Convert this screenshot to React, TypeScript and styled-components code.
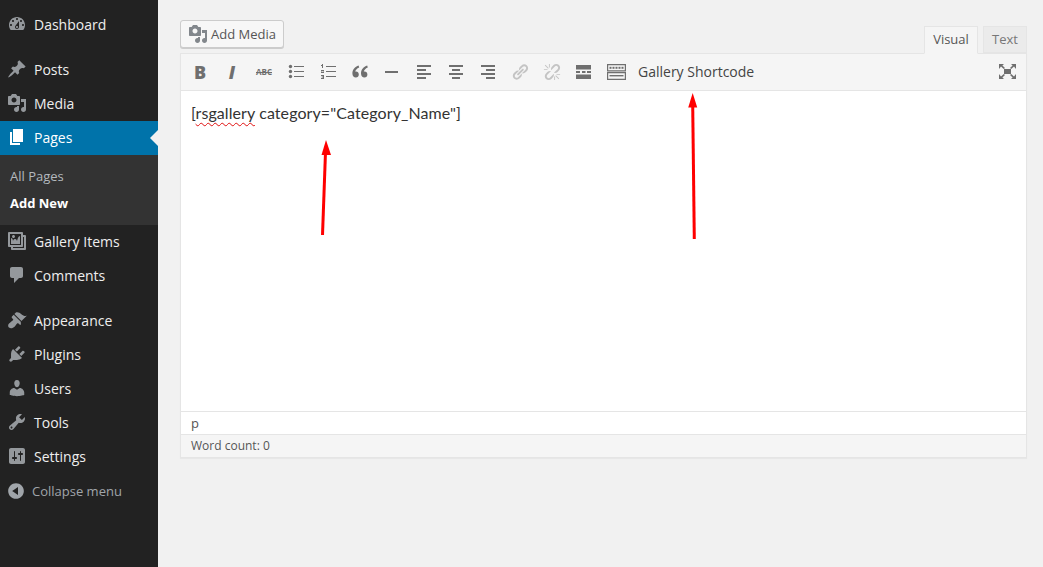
import React from "react";
import styled, { createGlobalStyle } from "styled-components";

const Global = createGlobalStyle`
  html, body { margin: 0; padding: 0; background: #f1f1f1; overflow: hidden; }
  * { box-sizing: border-box; }
  body { font-family: "Open Sans", "Liberation Sans", sans-serif; }
`;

const Page = styled.div`
  position: relative;
  display: flex;
  width: 1043px;
  height: 567px;
  overflow: hidden;
`;
const Sidebar = styled.nav`
  width: 158px;
  flex: none;
  background: #222;
  padding-top: 8px;
`;
const MenuRow = styled.div<{ $active?: boolean; $gapAbove?: boolean }>`
  position: relative;
  display: flex;
  align-items: center;
  height: 34px;
  margin-top: ${(p) => (p.$gapAbove ? "11px" : "0")};
  padding: 0 0 2px 7px;
  background: ${(p) => (p.$active ? "#0073aa" : "transparent")};
  color: ${(p) => (p.$active ? "#fff" : "#eee")};
  font-size: 14px;
  svg { color: ${(p) => (p.$active ? "#fff" : "#94989c")}; }
`;
const MenuLabel = styled.span`
  margin-left: 7px;
`;
const MenuIcon = styled.svg`
  width: 20px;
  height: 20px;
  flex: none;
  fill: currentColor;
`;
const Pointer = styled.span`
  position: absolute;
  right: 0;
  top: 9px;
  border: 8px solid transparent;
  border-right-color: #f1f1f1;
  border-left: 0;
`;
const SubMenu = styled.div`
  background: #333;
  height: 70px;
  padding-top: 8px;
`;
const SubItem = styled.div<{ $current?: boolean }>`
  height: 27px;
  line-height: 27px;
  padding-left: 10px;
  font-size: 13px;
  color: ${(p) => (p.$current ? "#fff" : "#b4b9be")};
  font-weight: ${(p) => (p.$current ? 700 : 400)};
`;
const Collapse = styled.div`
  display: flex;
  align-items: center;
  height: 34px;
  padding-left: 6px;
  color: #a0a5aa;
  font-size: 13px;
  svg { color: #a0a5aa; }
`;
const CollapseLabel = styled.span`
  margin-left: 6px;
`;

const Main = styled.main`
  flex: 1;
  padding: 20px 16px 0 22px;
`;
const EditorHead = styled.div`
  display: flex;
  justify-content: space-between;
  height: 33px;
`;
const MediaButton = styled.button`
  display: flex;
  align-items: center;
  gap: 3px;
  width: 104px;
  height: 28px;
  padding: 0 0 0 7px;
  background: #f7f7f7;
  border: 1px solid #ccc;
  border-radius: 3px;
  box-shadow: 0 1px 0 #ccc;
  color: #555;
  font: 13px "Open Sans", sans-serif;
  svg { width: 20px; height: 20px; fill: #82878c; }
`;
const Tabs = styled.div`
  display: flex;
  align-items: flex-start;
  gap: 5px;
  padding-top: 6px;
`;
const Tab = styled.div<{ $active?: boolean }>`
  position: relative;
  z-index: 1;
  height: ${(p) => (p.$active ? "28px" : "27px")};
  width: ${(p) => (p.$active ? "54px" : "44px")};
  border: 1px solid #e5e5e5;
  border-bottom-color: ${(p) => (p.$active ? "#f5f5f5" : "#e5e5e5")};
  background: ${(p) => (p.$active ? "#f5f5f5" : "#ebebeb")};
  color: ${(p) => (p.$active ? "#555" : "#777")};
  font-size: 13px;
  line-height: 25px;
  text-align: center;
`;
const Editor = styled.section`
  border: 1px solid #e5e5e5;
  box-shadow: 0 1px 1px rgba(0, 0, 0, 0.04);
  background: #fff;
`;
const Toolbar = styled.div`
  display: flex;
  align-items: center;
  height: 37px;
  padding: 0 3px 1px;
  background: #f5f5f5;
  border-bottom: 1px solid #e5e5e5;
`;
const Tool = styled.span<{ $muted?: boolean }>`
  display: flex;
  width: 32px;
  height: 30px;
  align-items: center;
  justify-content: center;
  color: ${(p) => (p.$muted ? "#c4c4c4" : "#6f6f6f")};
  svg { display: block; fill: currentColor; }
`;
const BoldGlyph = styled.span`
  font: 800 18px "Open Sans", sans-serif;
`;
const ItalicGlyph = styled.span`
  font: italic 800 18px "Open Sans", sans-serif;
`;
const StrikeGlyph = styled.span`
  font: 700 8px "Open Sans", sans-serif;
  text-decoration: line-through;
`;
const ShortcodeLabel = styled.span`
  margin-left: 6px;
  font-size: 14px;
  color: #444;
`;
const Spacer = styled.span`
  flex: 1;
`;
const Content = styled.div`
  height: 320px;
  padding: 10px 10px;
  font: 16px/24px Lato, "Liberation Sans", sans-serif;
  letter-spacing: 0.09px;
  color: #333;
`;
const Misspelled = styled.span`
  text-decoration: underline wavy #e01010;
  text-decoration-thickness: 1.2px;
  text-underline-offset: 3px;
`;
const PathBar = styled.div`
  height: 23px;
  padding-left: 10px;
  border-top: 1px solid #e5e5e5;
  font-size: 13px;
  line-height: 22px;
  color: #555;
`;
const CountBar = styled.div`
  height: 23px;
  padding-left: 10px;
  border-top: 1px solid #e5e5e5;
  background: #f5f5f5;
  font-size: 12px;
  line-height: 22px;
  color: #555;
`;
const ArrowLayer = styled.svg`
  position: absolute;
  left: 0;
  top: 0;
  width: 1043px;
  height: 567px;
  pointer-events: none;
`;

const P = {
  dashboard: "M3.76 16h12.48c1.1-1.37 1.76-3.11 1.76-5 0-4.42-3.58-8-8-8s-8 3.58-8 8c0 1.89.66 3.63 1.76 5zM10 4c.55 0 1 .45 1 1s-.45 1-1 1-1-.45-1-1 .45-1 1-1zM6 6c.55 0 1 .45 1 1s-.45 1-1 1-1-.45-1-1 .45-1 1-1zm8 0c.55 0 1 .45 1 1s-.45 1-1 1-1-.45-1-1 .45-1 1-1zm-5.37 5.55L12 7v6c0 1.1-.9 2-2 2s-2-.9-2-2c0-.57.24-1.08.63-1.45zM4 10c.55 0 1 .45 1 1s-.45 1-1 1-1-.45-1-1 .45-1 1-1zm12 0c.55 0 1 .45 1 1s-.45 1-1 1-1-.45-1-1 .45-1 1-1zm-5 3c0-.55-.45-1-1-1s-1 .45-1 1 .45 1 1 1 1-.45 1-1z",
  post: "M10.44 3.02l1.82-1.82 6.36 6.35-1.83 1.82c-1.05-.68-2.48-.57-3.41.36l-.75.75c-.92.93-1.04 2.35-.35 3.41l-1.83 1.82-2.41-2.41-2.8 2.79c-.42.42-3.38 2.71-3.8 2.29s1.86-3.39 2.28-3.81l2.79-2.79L4.1 9.36l1.83-1.82c1.05.69 2.48.57 3.4-.36l.75-.75c.93-.92 1.05-2.35.36-3.41z",
  media: "M13 11V4c0-.55-.45-1-1-1h-1.67L9 1H5L3.67 3H2c-.55 0-1 .45-1 1v7c0 .55.45 1 1 1h10c.55 0 1-.45 1-1zM7 4.5c1.38 0 2.5 1.12 2.5 2.5S8.38 9.5 7 9.5 4.5 8.38 4.5 7 5.62 4.5 7 4.5zM14 6h5v10.5c0 1.38-1.12 2.5-2.5 2.5S14 17.88 14 16.5s1.12-2.5 2.5-2.5c.17 0 .34.02.5.05V9h-3V6zm-4 8.05V13h2v3.5c0 1.38-1.12 2.5-2.5 2.5S7 17.88 7 16.5 8.12 14 9.5 14c.17 0 .34.02.5.05z",
  page: "M6 15V2h10v13H6zm-1 1h8v2H3V5h2v11z",
  gallery: "M16 4h1.96c.57 0 1.04.47 1.04 1.04v12.92c0 .57-.47 1.04-1.04 1.04H5.04C4.47 19 4 18.53 4 17.96V16H2.04C1.47 16 1 15.53 1 14.96V2.04C1 1.47 1.47 1 2.04 1h12.92c.57 0 1.04.47 1.04 1.04V4zM3 14h11V3H3v11zm5-8.5C8 4.67 7.33 4 6.5 4S5 4.67 5 5.5 5.67 7 6.5 7 8 6.33 8 5.5zm2 4.5s1-5 3-5v8H4V7c2 0 2 3 2 3s.33-2 2-2 2 2 2 2zm7 7V6h-1v8.96c0 .57-.47 1.04-1.04 1.04H6v1h11z",
  comments: "M5 2h9c1.1 0 2 .9 2 2v7c0 1.1-.9 2-2 2h-2l-5 5v-5H5c-1.1 0-2-.9-2-2V4c0-1.1.9-2 2-2z",
  appearance: "M14.48 11.06L7.41 3.99l1.5-1.5c.5-.56 2.3-.47 3.51.32 1.21.8 1.43 1.28 2.91 2.1 1.18.64 2.45 1.26 4.45.85zm-.71.71L6.7 4.7 4.93 6.47c-.39.39-.39 1.02 0 1.41l1.06 1.06c.39.39.39 1.03 0 1.42-.6.6-1.43 1.11-2.21 1.69-.35.26-.7.53-1.01.84C1.43 13.23.4 15.83 2 17.43c1.6 1.6 4.2.57 5.54-.77.31-.31.58-.66.84-1.01.58-.78 1.09-1.61 1.69-2.21.39-.39 1.03-.39 1.42 0l1.06 1.06c.39.39 1.02.39 1.41 0z",
  plugins: "M13.11 4.36L9.87 7.6 8 5.73l3.24-3.24c.35-.34 1.05-.2 1.56.32.52.51.66 1.21.31 1.55zm-8 1.77l.91-1.12 9.01 9.01-1.19.84c-.71.71-2.63 1.16-3.82 1.16H6.14L4.9 17.26c-.59.59-1.54.59-2.12 0-.59-.58-.59-1.53 0-2.12l1.24-1.24v-3.88c0-1.13.4-3.19 1.09-3.89zm7.26 3.97l3.24-3.24c.34-.35 1.04-.21 1.55.31.52.51.66 1.21.31 1.55l-3.24 3.25z",
  users: "M10 9.25c-2.27 0-2.73-3.44-2.73-3.44C7 4.02 7.82 2 9.97 2c2.16 0 2.98 2.02 2.71 3.81 0 0-.41 3.44-2.68 3.44zm0 2.57L12.72 10c2.39 0 4.52 2.33 4.52 4.53v2.49s-3.65 1.13-7.24 1.13c-3.65 0-7.24-1.13-7.24-1.13v-2.49c0-2.25 1.94-4.48 4.47-4.48z",
  tools: "M16.68 9.77c-1.34 1.34-3.3 1.67-4.95.99l-5.41 6.52c-.99.99-2.59.99-3.58 0s-.99-2.59 0-3.57l6.52-5.42c-.68-1.65-.35-3.61.99-4.95 1.28-1.28 3.12-1.62 4.72-1.06l-2.89 2.89 2.82 2.82 2.86-2.87c.53 1.58.18 3.39-1.08 4.65zM3.81 16.21c.4.39 1.04.39 1.43 0 .4-.4.4-1.04 0-1.43-.39-.4-1.03-.4-1.43 0-.39.39-.39 1.03 0 1.43z",
  settings: "M18 16V4c0-1.1-.9-2-2-2H4c-1.1 0-2 .9-2 2v12c0 1.1.9 2 2 2h12c1.1 0 2-.9 2-2zM8 11h1c.55 0 1 .45 1 1s-.45 1-1 1H8v1.5c0 .28-.22.5-.5.5s-.5-.22-.5-.5V13H6c-.55 0-1-.45-1-1s.45-1 1-1h1V5.5c0-.28.22-.5.5-.5s.5.22.5.5V11zm5-2h-1c-.55 0-1-.45-1-1s.45-1 1-1h1V5.5c0-.28.22-.5.5-.5s.5.22.5.5V7h1c.55 0 1 .45 1 1s-.45 1-1 1h-1v5.5c0 .28-.22.5-.5.5s-.5-.22-.5-.5V9z",
  collapse: "M10 2.16c4.33 0 7.84 3.51 7.84 7.84s-3.51 7.84-7.84 7.84S2.16 14.33 2.16 10 5.71 2.16 10 2.16zm2 11.72V6.12L6.18 9.97z",
  link: "M17.74 2.76c1.68 1.69 1.68 4.41 0 6.1l-1.53 1.52c-1.12 1.12-2.7 1.47-4.14 1.09l2.62-2.61.76-.77.76-.76c.84-.84.84-2.2 0-3.04-.84-.85-2.2-.85-3.04 0l-.77.76-3.38 3.38c-.37-1.44-.02-3.02 1.1-4.14l1.52-1.53c1.69-1.68 4.42-1.68 6.1 0zM8.59 13.43l5.34-5.34c.42-.42.42-1.1 0-1.52-.44-.43-1.13-.39-1.53 0l-5.33 5.34c-.42.42-.42 1.1 0 1.52.44.43 1.13.39 1.52 0zm-.76 2.29l4.14-4.15c.38 1.44.03 3.02-1.09 4.14l-1.52 1.53c-1.69 1.68-4.41 1.68-6.1 0-1.68-1.68-1.68-4.42 0-6.1l1.53-1.52c1.12-1.12 2.7-1.47 4.14-1.1l-4.14 4.15c-.85.84-.85 2.2 0 3.05.84.84 2.2.84 3.04 0z",
  unlink: "M17.74 2.26c1.68 1.69 1.68 4.41 0 6.1l-1.53 1.52c-1.12 1.12-2.7 1.47-4.14 1.09l2.62-2.61 1.52-1.53c.84-.84.84-2.2 0-3.04-.84-.85-2.2-.85-3.04 0L9.03 7.93c-.37-1.44-.02-3.02 1.1-4.14l1.52-1.53c1.69-1.68 4.42-1.68 6.1 0zM7.83 16.22l4.14-4.15c.38 1.44.03 3.02-1.09 4.14l-1.52 1.53c-1.69 1.68-4.41 1.68-6.1 0-1.68-1.68-1.68-4.42 0-6.1l1.53-1.52c1.12-1.12 2.7-1.47 4.14-1.1l-4.14 4.15c-.85.84-.85 2.2 0 3.05.84.84 2.2.84 3.04 0zM2 2.7l.7-.7 3.6 3.6-.7.7zM13.7 14.4l.7-.7 3.6 3.6-.7.7zM6.6 1h1v4h-1zM1 6.6h4v1H1zM12.4 15h1v4h-1zM15 12.4h4v1h-4z",
};

const Icon = ({ d }: { d: string }) => (
  <MenuIcon viewBox="0 0 20 20">
    <path d={d} />
  </MenuIcon>
);

const Lines = ({ rows }: { rows: [number, number, number][] }) => (
  <svg width="16" height="16" viewBox="0 0 16 16">
    {rows.map(([x, y, w], i) => (
      <rect key={i} x={x} y={y} width={w} height={2} />
    ))}
  </svg>
);

const BulletList = () => (
  <svg width="16" height="16" viewBox="0 0 16 16">
    {[2, 7, 12].map((y) => (
      <React.Fragment key={y}>
        <circle cx="2.5" cy={y + 0.5} r="1.7" />
        <rect x="6" y={y} width="10" height="1" />
      </React.Fragment>
    ))}
  </svg>
);

const NumberList = () => (
  <svg width="16" height="16" viewBox="0 0 16 16">
    <path d="M2 0h1v4H2zM1 1h1v1H1z" />
    <path d="M1 6h3v1.5H2.2V8H4v1H1V7.5h1.8V7H1z" />
    <path d="M1 11h3v4H1v-1h2v-.5H1.6v-1H3V12H1z" />
    {[2, 7, 12].map((y) => (
      <rect key={y} x="6" y={y} width="10" height="1" />
    ))}
  </svg>
);

const QuoteMark = () => (
  <svg width="16" height="13" viewBox="0 0 16 13">
    <path d="M6.6 0.6C3 1.8 0.4 4.6 0.4 8.6 0.4 11 2 12.6 3.8 12.6c1.8 0 3-1.3 3-3s-1.2-3-2.8-3c-.3 0-.6 0-.8.1C3.5 5 4.8 3.4 7.2 2.4z" />
    <path d="M15.2 0.6C11.6 1.8 9 4.6 9 8.6c0 2.4 1.6 4 3.4 4 1.8 0 3-1.3 3-3s-1.2-3-2.8-3c-.3 0-.6 0-.8.1.3-1.7 1.6-3.3 4-4.3z" />
  </svg>
);

const MoreBreak = () => (
  <svg width="16" height="16" viewBox="0 0 16 16">
    <rect x="0" y="1" width="15" height="4.5" />
    <rect x="0" y="7" width="4" height="2" />
    <rect x="6" y="7" width="3.5" height="2" />
    <rect x="11" y="7" width="4" height="2" />
    <rect x="0" y="10.5" width="15" height="4.5" />
  </svg>
);

const KeyboardTable = () => (
  <svg width="19" height="16" viewBox="0 0 19 16">
    <path d="M0 0h19v7.5H0zM1.2 1.2v5.1h16.6V1.2z" />
    <path d="M0 8h19v8H0zM1.2 9.2v5.6h16.6V9.2z" />
    {[3, 6, 9, 12, 15].map((x) => (
      <rect key={x} x={x - 0.5} y="2.8" width="2" height="2" />
    ))}
    <rect x="2.5" y="11" width="14" height="1.4" />
  </svg>
);

const items: { label: string; d: string; gap?: boolean }[] = [
  { label: "Gallery Items", d: P.gallery },
  { label: "Comments", d: P.comments },
  { label: "Appearance", d: P.appearance, gap: true },
  { label: "Plugins", d: P.plugins },
  { label: "Users", d: P.users },
  { label: "Tools", d: P.tools },
  { label: "Settings", d: P.settings },
];

export default function App() {
  return (
    <Page>
      <Global />
      <Sidebar>
        <MenuRow>
          <Icon d={P.dashboard} />
          <MenuLabel>Dashboard</MenuLabel>
        </MenuRow>
        <MenuRow $gapAbove>
          <Icon d={P.post} />
          <MenuLabel>Posts</MenuLabel>
        </MenuRow>
        <MenuRow>
          <Icon d={P.media} />
          <MenuLabel>Media</MenuLabel>
        </MenuRow>
        <MenuRow $active>
          <Icon d={P.page} />
          <MenuLabel>Pages</MenuLabel>
          <Pointer />
        </MenuRow>
        <SubMenu>
          <SubItem>All Pages</SubItem>
          <SubItem $current>Add New</SubItem>
        </SubMenu>
        {items.map((it) => (
          <MenuRow key={it.label} $gapAbove={it.gap}>
            <Icon d={it.d} />
            <MenuLabel>{it.label}</MenuLabel>
          </MenuRow>
        ))}
        <Collapse>
          <Icon d={P.collapse} />
          <CollapseLabel>Collapse menu</CollapseLabel>
        </Collapse>
      </Sidebar>
      <Main>
        <EditorHead>
          <MediaButton>
            <svg viewBox="0 0 20 20">
              <path d={P.media} />
            </svg>
            Add Media
          </MediaButton>
          <Tabs>
            <Tab $active>Visual</Tab>
            <Tab>Text</Tab>
          </Tabs>
        </EditorHead>
        <Editor>
          <Toolbar>
            <Tool><BoldGlyph>B</BoldGlyph></Tool>
            <Tool><ItalicGlyph>I</ItalicGlyph></Tool>
            <Tool><StrikeGlyph>ABC</StrikeGlyph></Tool>
            <Tool><BulletList /></Tool>
            <Tool><NumberList /></Tool>
            <Tool><QuoteMark /></Tool>
            <Tool>
              <Lines rows={[[1, 7, 13]]} />
            </Tool>
            <Tool><Lines rows={[[1, 1, 14], [1, 5, 9], [1, 9, 14], [1, 13, 9]]} /></Tool>
            <Tool><Lines rows={[[1, 1, 14], [4, 5, 8], [1, 9, 14], [4, 13, 8]]} /></Tool>
            <Tool><Lines rows={[[1, 1, 14], [6, 5, 9], [1, 9, 14], [6, 13, 9]]} /></Tool>
            <Tool $muted>
              <svg width="18" height="18" viewBox="0 0 20 20"><path d={P.link} /></svg>
            </Tool>
            <Tool $muted>
              <svg width="18" height="18" viewBox="0 0 20 20"><path d={P.unlink} /></svg>
            </Tool>
            <Tool><MoreBreak /></Tool>
            <Tool><KeyboardTable /></Tool>
            <ShortcodeLabel>Gallery Shortcode</ShortcodeLabel>
            <Spacer />
            <Tool>
              <svg width="17" height="15" viewBox="0 0 17 15">
                <rect x="5" y="5" width="7" height="5" />
                <path d="M0 0h5L3.4 1.6 6 4 4.8 5 2 2.6 0 5zM17 0h-5l1.6 1.6L11 4l1.2 1L15 2.6 17 5zM0 15h5l-1.6-1.6L6 11l-1.2-1L2 12.4 0 10zM17 15h-5l1.6-1.6L11 11l1.2-1 2.8 2.4 2-2.4z" />
              </svg>
            </Tool>
          </Toolbar>
          <Content>
            [<Misspelled>rsgallery</Misspelled> category="Category_Name"]
          </Content>
          <PathBar>p</PathBar>
          <CountBar>Word count: 0</CountBar>
        </Editor>
      </Main>
      <ArrowLayer viewBox="0 0 1043 567">
        <line x1="322.5" y1="235" x2="325.5" y2="152" stroke="#f00" strokeWidth="3" />
        <polygon points="326,140 331,155 321.5,155" fill="#f00" />
        <line x1="694.3" y1="239" x2="692.7" y2="105" stroke="#f00" strokeWidth="3" />
        <polygon points="692.7,93 697.2,107.5 688.2,107.5" fill="#f00" />
      </ArrowLayer>
    </Page>
  );
}
